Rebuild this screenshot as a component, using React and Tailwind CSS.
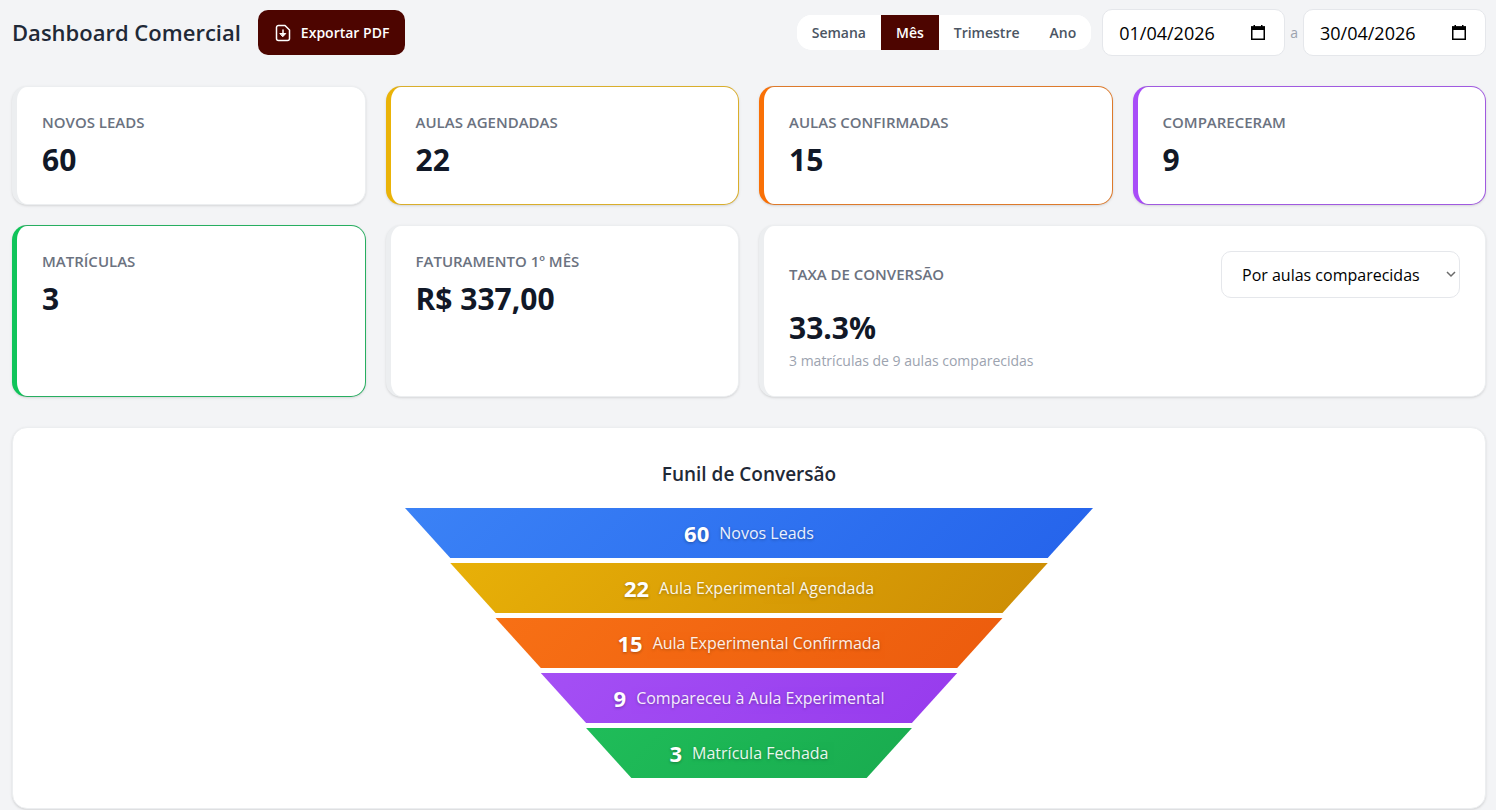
import React, { useState } from "react";

const periods = ["Semana", "Mês", "Trimestre", "Ano"];

const stats = [
  {
    label: "Novos Leads",
    value: "60",
    border: "border-[#eceef0] border-l-[#eceef0]",
  },
  {
    label: "Aulas Agendadas",
    value: "22",
    border: "border-[#d9ae2c] border-l-[#eab308]",
  },
  {
    label: "Aulas Confirmadas",
    value: "15",
    border: "border-[#dd7a2c] border-l-[#f97006]",
  },
  {
    label: "Compareceram",
    value: "9",
    border: "border-[#a05ae0] border-l-[#a84cf8]",
  },
  {
    label: "Matrículas",
    value: "3",
    border: "border-[#27ae60] border-l-[#10c45a]",
  },
  {
    label: "Faturamento 1º mês",
    value: "R$ 337,00",
    border: "border-[#eceef0] border-l-[#eceef0]",
  },
];

const funnel = [
  {
    label: "Novos Leads",
    value: 60,
    colors: "from-[#3b82f6] to-[#2563eb]",
  },
  {
    label: "Aula Experimental Agendada",
    value: 22,
    colors: "from-[#eab308] to-[#ca8a04]",
  },
  {
    label: "Aula Experimental Confirmada",
    value: 15,
    colors: "from-[#f97316] to-[#ea580c]",
  },
  {
    label: "Compareceu à Aula Experimental",
    value: 9,
    colors: "from-[#a855f7] to-[#9333ea]",
  },
  {
    label: "Matrícula Fechada",
    value: 3,
    colors: "from-[#22c55e] to-[#16a34a]",
  },
];

// how much each funnel step narrows on each side, in %
const STEP = 6.58;

const getFunnelShape = (index) => {
  const top = index * STEP;
  const bottom = (index + 1) * STEP;
  return `polygon(${top}% 0, ${100 - top}% 0, ${100 - bottom}% 100%, ${bottom}% 100%)`;
};

const DateField = ({ label, value, onChange }) => {
  return (
    <div className="flex h-[47px] w-[183px] items-center rounded-[10px] border border-[#e5e7eb] bg-white pl-4 pr-[18px]">
      <input
        type="text"
        aria-label={label}
        value={value}
        onChange={(e) => onChange(e.target.value)}
        className="min-w-0 flex-1 bg-transparent text-lg text-black outline-none"
      />
      <button type="button" aria-label={`Abrir calendário: ${label}`}>
        <svg width="16" height="18" viewBox="0 0 16 18" fill="none">
          <path
            d="M1.75 3h12.5v12.25H1.75z"
            stroke="#000"
            strokeWidth="1.5"
          />
          <path d="M1 2.5h14V6H1zM3.5 1h1.5v2H3.5zM11 1h1.5v2H11z" fill="#000" />
        </svg>
      </button>
    </div>
  );
};

const StatCard = ({ label, value, border }) => {
  return (
    <div
      className={`rounded-[15px] border border-l-[5px] bg-white p-[25px] shadow-sm ${border}`}
    >
      <p className="mb-2 text-[15px] leading-5 font-semibold text-[#6b7280] uppercase">
        {label}
      </p>
      <p className="text-3xl leading-[39px] font-bold text-[#111827]">
        {value}
      </p>
    </div>
  );
};

const App = () => {
  const [period, setPeriod] = useState("Mês");
  const [startDate, setStartDate] = useState("01/04/2026");
  const [endDate, setEndDate] = useState("30/04/2026");
  const [rateBase, setRateBase] = useState("comparecidas");

  return (
    <div className="min-h-screen bg-[#f3f4f6] pt-[9px] pr-[10px] pl-3 font-['Open_Sans','Noto_Sans',sans-serif]">
      {/* Header */}
      <header className="mb-[30px] flex flex-wrap items-center justify-between gap-3">
        <div className="flex items-center gap-[17px]">
          <h1 className="text-[22px] font-semibold text-[#1f2937]">
            Dashboard Comercial
          </h1>
          <button
            type="button"
            className="flex h-[45px] items-center gap-[9px] rounded-[10px] bg-[#4d0500] px-4 text-sm font-semibold text-white"
          >
            <svg
              width="18"
              height="18"
              viewBox="0 0 18 18"
              fill="none"
              stroke="currentColor"
              strokeWidth="1.5"
              strokeLinecap="round"
              strokeLinejoin="round"
            >
              <path d="M4.5 1.5h6.5L15.5 6v8.5a2 2 0 0 1-2 2h-9a2 2 0 0 1-2-2v-11a2 2 0 0 1 2-2z" />
              <path d="M9 6v5" />
              <path d="M6.2 9.5h5.6L9 12.5z" fill="currentColor" strokeWidth="1" />
            </svg>
            Exportar PDF
          </button>
        </div>

        <div className="flex items-center">
          <div className="mr-[11px] flex overflow-hidden rounded-[15px] bg-white">
            {periods.map((item) => (
              <button
                key={item}
                type="button"
                onClick={() => setPeriod(item)}
                className={`h-[35px] px-[15px] text-sm font-semibold ${
                  period === item
                    ? "bg-[#4d0500] text-white"
                    : "bg-white text-[#4b5563]"
                }`}
              >
                {item}
              </button>
            ))}
          </div>
          <DateField
            label="Data inicial"
            value={startDate}
            onChange={setStartDate}
          />
          <span className="px-[5px] text-sm text-[#9ca3af]">a</span>
          <DateField label="Data final" value={endDate} onChange={setEndDate} />
        </div>
      </header>

      {/* Cards */}
      <section className="mb-[30px] grid grid-cols-4 gap-5">
        {stats.map((stat) => (
          <StatCard key={stat.label} {...stat} />
        ))}

        <div className="col-span-2 rounded-[15px] border border-l-[5px] border-[#eceef0] bg-white p-[25px] shadow-sm">
          <div className="mb-[10px] flex items-center justify-between">
            <label
              htmlFor="rate-base"
              className="text-[15px] font-semibold text-[#6b7280] uppercase"
            >
              Taxa de conversão
            </label>
            <div className="relative">
              <select
                id="rate-base"
                value={rateBase}
                onChange={(e) => setRateBase(e.target.value)}
                className="h-[47px] w-[239px] appearance-none rounded-[10px] border border-[#e5e7eb] bg-white pl-5 text-base text-black"
              >
                <option value="comparecidas">Por aulas comparecidas</option>
                <option value="agendadas">Por aulas agendadas</option>
                <option value="leads">Por leads</option>
              </select>
              <svg
                className="pointer-events-none absolute top-5 right-1"
                width="10"
                height="7"
                viewBox="0 0 10 7"
                fill="none"
                stroke="#6b6b6b"
                strokeWidth="1.5"
              >
                <path d="M1 1l4 4 4-4" />
              </svg>
            </div>
          </div>
          <p className="text-3xl leading-[39px] font-bold text-[#111827]">
            33.3%
          </p>
          <p className="mt-1 text-sm leading-5 text-[#9ca3af]">
            3 matrículas de 9 aulas comparecidas
          </p>
        </div>
      </section>

      {/* Funnel */}
      <section className="rounded-[15px] border border-[#eceef0] bg-white p-[30px] shadow-sm">
        <h2 className="mb-[18px] text-center text-[19px] leading-8 font-semibold text-[#1f2937]">
          Funil de Conversão
        </h2>
        <div className="mx-auto flex max-w-[688px] flex-col gap-[5px]">
          {funnel.map((step, index) => (
            <div
              key={step.label}
              className={`flex h-[50px] items-center justify-center gap-[10px] bg-linear-135 text-white text-shadow-[0_1px_3px_rgba(0,0,0,0.3)] ${step.colors}`}
              style={{ clipPath: getFunnelShape(index) }}
            >
              <span className="text-[22px] font-bold">{step.value}</span>
              <span className="text-base opacity-90">{step.label}</span>
            </div>
          ))}
        </div>
      </section>
    </div>
  );
};

export default App;
